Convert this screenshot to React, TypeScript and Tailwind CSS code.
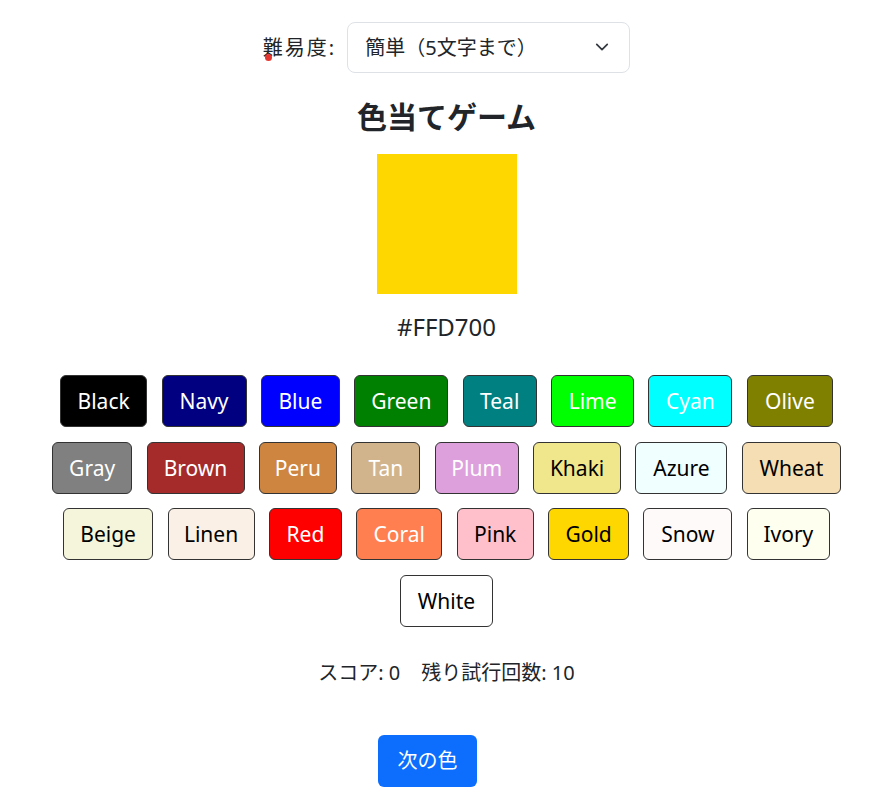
import { useState } from "react";

type Swatch = { name: string; bg: string; w: string; text: string };

const rows: Swatch[][] = [
  [
    { name: "Black", bg: "bg-[#000000]", w: "w-[87px]", text: "text-white" },
    { name: "Navy", bg: "bg-[#000080]", w: "w-[85px]", text: "text-white" },
    { name: "Blue", bg: "bg-[#0000ff]", w: "w-[79px]", text: "text-white" },
    { name: "Green", bg: "bg-[#008000]", w: "w-[94px]", text: "text-white" },
    { name: "Teal", bg: "bg-[#008080]", w: "w-[74px]", text: "text-white" },
    { name: "Lime", bg: "bg-[#00ff00]", w: "w-[83px]", text: "text-white" },
    { name: "Cyan", bg: "bg-[#00ffff]", w: "w-[84px]", text: "text-white" },
    { name: "Olive", bg: "bg-[#808000]", w: "w-[86px]", text: "text-white" },
  ],
  [
    { name: "Gray", bg: "bg-[#808080]", w: "w-[80px]", text: "text-white" },
    { name: "Brown", bg: "bg-[#a52a2a]", w: "w-[98px]", text: "text-white" },
    { name: "Peru", bg: "bg-[#cd853f]", w: "w-[78px]", text: "text-white" },
    { name: "Tan", bg: "bg-[#d2b48c]", w: "w-[69px]", text: "text-white" },
    { name: "Plum", bg: "bg-[#dda0dd]", w: "w-[84px]", text: "text-white" },
    { name: "Khaki", bg: "bg-[#f0e68c]", w: "w-[88px]", text: "text-black" },
    { name: "Azure", bg: "bg-[#f0ffff]", w: "w-[92px]", text: "text-black" },
    { name: "Wheat", bg: "bg-[#f5deb3]", w: "w-[99px]", text: "text-black" },
  ],
  [
    { name: "Beige", bg: "bg-[#f5f5dc]", w: "w-[90px]", text: "text-black" },
    { name: "Linen", bg: "bg-[#faf0e6]", w: "w-[87px]", text: "text-black" },
    { name: "Red", bg: "bg-[#ff0000]", w: "w-[73px]", text: "text-white" },
    { name: "Coral", bg: "bg-[#ff7f50]", w: "w-[86px]", text: "text-white" },
    { name: "Pink", bg: "bg-[#ffc0cb]", w: "w-[77px]", text: "text-black" },
    { name: "Gold", bg: "bg-[#ffd700]", w: "w-[81px]", text: "text-black" },
    { name: "Snow", bg: "bg-[#fffafa]", w: "w-[89px]", text: "text-black" },
    { name: "Ivory", bg: "bg-[#fffff0]", w: "w-[83px]", text: "text-black" },
  ],
  [{ name: "White", bg: "bg-[#ffffff]", w: "w-[93px]", text: "text-black" }],
];

export default function App() {
  const [level, setLevel] = useState("easy");
  const [score] = useState(0);
  const [tries] = useState(10);

  return (
    <div className="min-h-screen bg-white text-[#212529] font-['Noto_Sans','Noto_Sans_CJK_JP',sans-serif] flex flex-col items-center pt-[22px]">
      {/* difficulty */}
      <div className="flex items-center gap-[11px] h-[51px]">
        <label className="relative text-[20px] leading-[30px] tracking-[2px]">
          難易度:
          <span className="absolute left-[2px] top-[21px] w-[7px] h-[7px] rounded-full bg-[#e5372f]" />
        </label>
        <div className="relative w-[283px] h-[51px]">
          <select
            value={level}
            onChange={(e) => setLevel(e.target.value)}
            className="appearance-none w-full h-full border border-[#dee2e6] rounded-[8px] bg-white pl-[17px] pr-10 text-[20px] leading-[30px] text-[#212529] outline-none"
          >
            <option value="easy">簡単（5文字まで）</option>
            <option value="normal">普通</option>
            <option value="hard">難しい</option>
          </select>
          <svg
            className="pointer-events-none absolute right-[21px] top-[18px]"
            width="14"
            height="14"
            viewBox="0 0 16 16"
            fill="none"
            stroke="#343a40"
            strokeWidth="2"
            strokeLinecap="round"
            strokeLinejoin="round"
          >
            <path d="m2 5 6 6 6-6" />
          </svg>
        </div>
      </div>

      <h2 className="mt-[26px] text-[30px] leading-[36px] font-bold">色当てゲーム</h2>

      <div className="mt-[19px] w-[140px] h-[140px] bg-[#ffd700]" />

      <div className="mt-[18px] text-[24px] leading-[29px]">#FFD700</div>

      {/* color buttons */}
      <div className="mt-[34px] flex flex-col items-center gap-y-[14.7px]">
        {rows.map((row, i) => (
          <div key={i} className="flex gap-x-[14.4px]">
            {row.map((c) => (
              <button
                key={c.name}
                className={`${c.bg} ${c.w} ${c.text} h-[52px] border border-[#333] rounded-[6px] text-[21px] leading-[30px] text-center`}
              >
                {c.name}
              </button>
            ))}
          </div>
        ))}
      </div>

      <div className="mt-[31px] text-[20px] leading-[30px] flex gap-[21px]">
        <span>スコア: {score}</span>
        <span>残り試行回数: {tries}</span>
      </div>

      <button className="mt-[47px] mr-[38px] w-[99px] h-[52px] rounded-[6px] bg-[#0d6efd] text-white text-[20px] leading-[30px]">
        次の色
      </button>
    </div>
  );
}
